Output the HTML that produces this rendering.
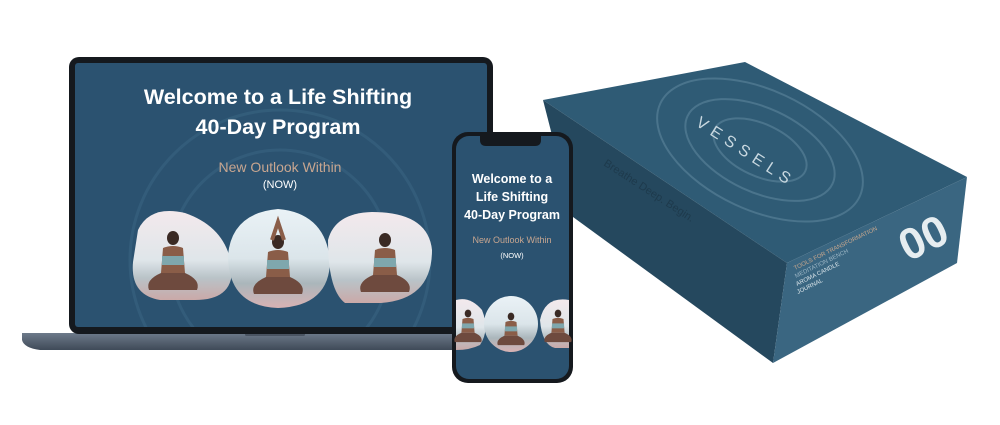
<!DOCTYPE html>
<html><head><style>
html,body{margin:0;padding:0;background:#fff;width:1000px;height:425px;overflow:hidden}
svg{display:block}
text{font-family:"Liberation Sans",sans-serif}
</style></head><body>
<svg width="1000" height="425" viewBox="0 0 1000 425" xmlns="http://www.w3.org/2000/svg">
<defs>
<linearGradient id="sky" x1="0" y1="0" x2="0" y2="1">
<stop offset="0" stop-color="#f3e9ec"/><stop offset="0.55" stop-color="#dfe6ea"/><stop offset="0.75" stop-color="#b9c3c8"/><stop offset="1" stop-color="#caa9a8"/></linearGradient>
<linearGradient id="sky2" x1="0" y1="0" x2="0" y2="1">
<stop offset="0" stop-color="#eaf2f6"/><stop offset="0.5" stop-color="#dbe5ea"/><stop offset="0.75" stop-color="#aab6bb"/><stop offset="1" stop-color="#d8b2b3"/></linearGradient>
<linearGradient id="base" x1="0" y1="0" x2="0" y2="1"><stop offset="0" stop-color="#6d7a8a"/><stop offset="1" stop-color="#3f4a58"/></linearGradient>
<clipPath id="lscr"><rect x="75" y="63" width="412" height="264"/></clipPath>
<clipPath id="topface"><path d="M543,100 L745,62 L967,177 L787,263 Z"/></clipPath>
<g id="person">
<ellipse cx="0" cy="-30" rx="6" ry="7" fill="#3a2a24"/>
<path d="M-10,-20 Q0,-24 10,-20 L12,5 L-12,5 Z" fill="#8a5d48"/>
<path d="M-11,-12 L11,-12 L11,-3 L-11,-3Z" fill="#7fa7ad"/>
<path d="M-12,5 Q-28,12 -24,22 L24,22 Q28,12 12,5 Z" fill="#6e4a3e"/>
</g>
</defs>

<!-- Laptop base -->
<path d="M22,333 L470,333 L470,350 L40,350 Q24,348 22,340 Z" fill="url(#base)"/>
<rect x="245" y="333" width="60" height="3" rx="1.5" fill="#4a5462"/>
<!-- Laptop screen -->
<rect x="69" y="57" width="424" height="277" rx="10" fill="#15191e"/>
<rect x="75" y="63" width="412" height="264" rx="3" fill="#2b5270"/>
<g clip-path="url(#lscr)" opacity="0.5">
<circle cx="280" cy="260" r="150" fill="none" stroke="#3b6784" stroke-width="3"/>
<circle cx="280" cy="260" r="110" fill="none" stroke="#3b6784" stroke-width="3"/>
</g>
<text x="278" y="104" font-size="21.5" font-weight="bold" fill="#fff" text-anchor="middle">Welcome to a Life Shifting</text>
<text x="278" y="134" font-size="21.5" font-weight="bold" fill="#fff" text-anchor="middle">40-Day Program</text>
<text x="280" y="172" font-size="14" fill="#c8a690" text-anchor="middle">New Outlook Within</text>
<text x="280" y="188" font-size="11" fill="#fff" text-anchor="middle">(NOW)</text>
<path d="M138,230 Q150,205 185,213 Q228,228 232,270 Q232,300 195,300 L160,300 Q130,295 133,262 Z" fill="url(#sky)"/>
<path d="M228,255 Q232,213 278,209 Q325,213 330,260 Q330,306 278,308 Q228,306 228,255 Z" fill="url(#sky2)"/>
<path d="M328,240 Q335,213 372,212 Q428,212 432,250 Q432,300 380,303 L345,303 Q328,290 328,240Z" fill="url(#sky)"/>
<use href="#person" transform="translate(173,268)"/>
<use href="#person" transform="translate(278,272)"/>
<path d="M272,240 L278,222 L284,240" stroke="#8a5d48" stroke-width="4" fill="none"/>
<use href="#person" transform="translate(385,270)"/>

<!-- Box -->
<path d="M543,100 L745,62 L967,177 L787,263 Z" fill="#2f5b75"/>
<path d="M543,100 L787,263 L773,363 L573,217 Z" fill="#25485e"/>
<path d="M787,263 L967,177 L957,263 L773,363 Z" fill="#3a6681"/>
<g clip-path="url(#topface)" opacity="0.35" fill="none" stroke="#7fa3b8" stroke-width="2">
<ellipse cx="760" cy="150" rx="110" ry="60" transform="rotate(25 760 150)"/>
<ellipse cx="760" cy="150" rx="80" ry="42" transform="rotate(25 760 150)"/>
<ellipse cx="760" cy="150" rx="50" ry="26" transform="rotate(25 760 150)"/>
</g>
<text x="0" y="0" font-size="16" fill="#c9d8e0" letter-spacing="6" transform="translate(695,125) rotate(33)">VESSELS</text>
<text x="0" y="0" font-size="11" fill="#1e3a4c" transform="translate(603,165) rotate(33)">Breathe Deep. Begin.</text>
<text x="0" y="0" font-size="44" font-weight="bold" fill="#e6edf0" transform="translate(908,262) rotate(-26)">00</text>
<text x="0" y="0" font-size="6" fill="#c9a88e" transform="translate(795,270) rotate(-26)">TOOLS FOR TRANSFORMATION</text>
<text x="0" y="0" font-size="6" fill="#9bb5c4" transform="translate(796,278) rotate(-26)">MEDITATION BENCH</text>
<text x="0" y="0" font-size="6" fill="#dbe5ea" transform="translate(797,286) rotate(-26)">AROMA CANDLE</text>
<text x="0" y="0" font-size="6" fill="#dbe5ea" transform="translate(798,294) rotate(-26)">JOURNAL</text>

<!-- Phone -->
<rect x="452" y="132" width="121" height="251" rx="16" fill="#15191e"/>
<rect x="456" y="136" width="113" height="243" rx="13" fill="#2b5270"/>
<path d="M480,136 L541,136 L541,140 Q541,146 535,146 L486,146 Q480,146 480,140Z" fill="#15191e"/>
<text x="512" y="183" font-size="12.5" font-weight="bold" fill="#fff" text-anchor="middle">Welcome to a</text>
<text x="512" y="201" font-size="12.5" font-weight="bold" fill="#fff" text-anchor="middle">Life Shifting</text>
<text x="512" y="219" font-size="12.5" font-weight="bold" fill="#fff" text-anchor="middle">40-Day Program</text>
<text x="512" y="243" font-size="9" fill="#c8a690" text-anchor="middle">New Outlook Within</text>
<text x="512" y="258" font-size="7.5" fill="#fff" text-anchor="middle">(NOW)</text>
<path d="M456,300 Q470,296 482,310 Q490,330 480,345 Q470,350 456,350Z" fill="url(#sky)"/>
<ellipse cx="511" cy="324" rx="27" ry="28" fill="url(#sky2)"/>
<path d="M569,300 Q545,296 540,320 Q542,345 555,348 L569,348Z" fill="url(#sky)"/>
<use href="#person" transform="translate(468,330) scale(0.55)"/>
<use href="#person" transform="translate(511,333) scale(0.55)"/>
<use href="#person" transform="translate(558,330) scale(0.55)"/>
</svg>
</body></html>
